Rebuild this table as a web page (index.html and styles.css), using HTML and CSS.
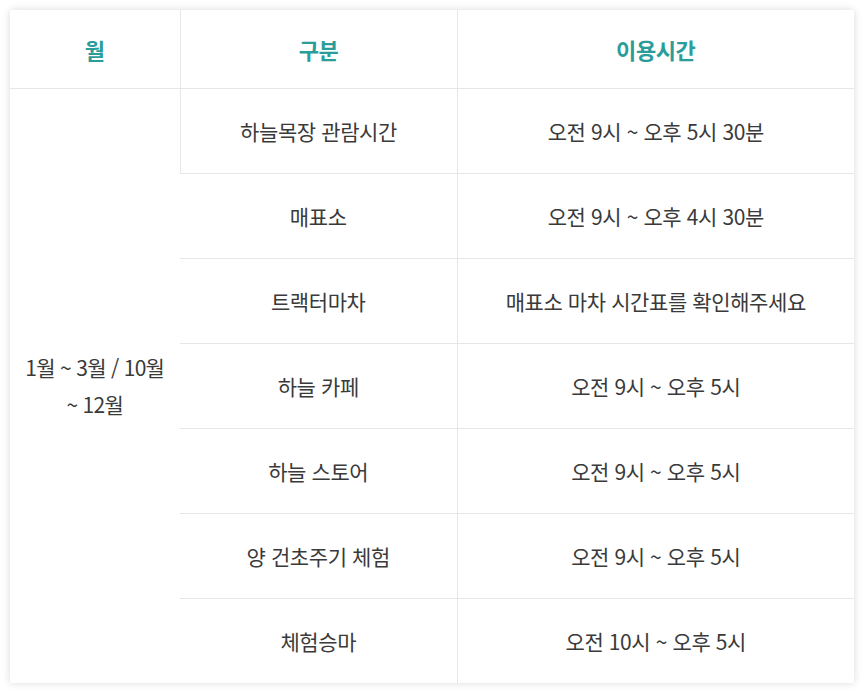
FILE: index.html
```html
<!DOCTYPE html>
<html lang="ko">
<head>
<meta charset="utf-8">
<title>이용시간</title>
<link rel="stylesheet" href="styles.css">
</head>
<body>
<div class="wrap">
  <table class="hours">
    <colgroup>
      <col class="c-month">
      <col class="c-type">
      <col class="c-time">
    </colgroup>
    <thead>
      <tr>
        <th>월</th>
        <th>구분</th>
        <th>이용시간</th>
      </tr>
    </thead>
    <tbody>
      <tr>
        <td class="month" rowspan="7">1월 ~ 3월 / 10월<br>~ 12월</td>
        <td class="boxed">하늘목장 관람시간</td>
        <td>오전 9시 ~ 오후 5시 30분</td>
      </tr>
      <tr><td>매표소</td><td>오전 9시 ~ 오후 4시 30분</td></tr>
      <tr><td>트랙터마차</td><td>매표소 마차 시간표를 확인해주세요</td></tr>
      <tr><td>하늘 카페</td><td>오전 9시 ~ 오후 5시</td></tr>
      <tr><td>하늘 스토어</td><td>오전 9시 ~ 오후 5시</td></tr>
      <tr><td>양 건초주기 체험</td><td>오전 9시 ~ 오후 5시</td></tr>
      <tr class="last"><td>체험승마</td><td>오전 10시 ~ 오후 5시</td></tr>
    </tbody>
  </table>
</div>
</body>
</html>
```
FILE: styles.css
```css
html, body {
  margin: 0;
  padding: 0;
  background: #ffffff;
}
.wrap {
  padding: 10px;
}
.hours {
  width: 844px;
  border-collapse: collapse;
  table-layout: fixed;
  background: #fff;
  box-shadow: 0 0 8px rgba(0, 0, 0, 0.15);
  font-family: "Noto Sans CJK KR", "Noto Sans", sans-serif;
  font-size: 21px;
  letter-spacing: -0.4px;
  color: #3a3a3a;
  text-align: center;
}
.c-month { width: 170px; }
.c-type { width: 277px; }
.c-time { width: 397px; }

.hours th {
  height: 78px;
  padding: 0;
  font-size: 22px;
  font-weight: 700;
  color: #2a9d9a;
  border-bottom: 1px solid #e6e6e6;
  border-left: 1px solid #e6e6e6;
  vertical-align: middle;
}
.hours th:first-child { border-left: none; }

.hours td {
  height: 84px;
  padding: 0;
  line-height: 28px;
  border-bottom: 1px solid #e6e6e6;
  border-left: 1px solid #e6e6e6;
  vertical-align: middle;
}
.hours td:first-child { border-left: none; }
.hours td.boxed { border-left: 1px solid #e6e6e6; }
.hours td.month {
  border-bottom: none;
  line-height: 37px;
  letter-spacing: -0.7px;
  padding: 0 4px;
}
.hours tr.last td { border-bottom: none; }
```
